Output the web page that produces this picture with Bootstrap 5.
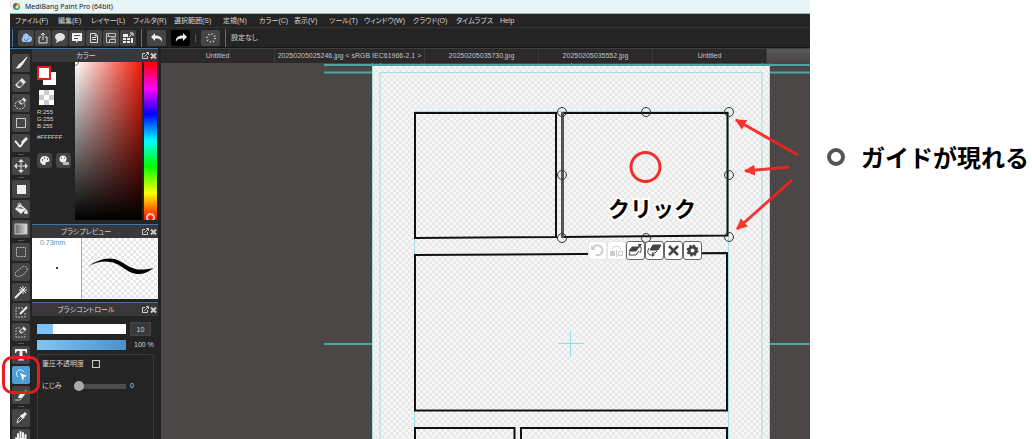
<!DOCTYPE html>
<html lang="ja">
<head>
<meta charset="utf-8">
<meta name="viewport" content="width=device-width, initial-scale=1">
<title>MediBang Paint Pro</title>
<link href="https://cdn.jsdelivr.net/npm/bootstrap@5.3.0/dist/css/bootstrap.min.css" rel="stylesheet">
<style>
  :root { --line:#3f74a8; --ink:#d4d4d4; --dark:#242424; --btn:#454446; }
  body { height:100vh; overflow:hidden; background:#fff; padding-left:10px;
    font:7px/10px "Liberation Sans","Noto Sans CJK JP",sans-serif; font-feature-settings:"palt"; color:#000; }
  button { padding:0; border:0; color:#e4e4e4; line-height:0; }
  button svg { display:block; margin:auto; }
  .app { background:var(--dark); color:var(--ink); min-width:0; }
  .app-body { min-height:0; }
  .titlebar { height:14px; background:#e8f5f7; color:#222; font-family:"Noto Sans",sans-serif; padding-left:3px; gap:5px; border-bottom:1px solid #9fb5b3; }
  .menus { height:14px; display:grid; grid-template-columns:43px 33px 42px 41px 49px 36px 35px 35px 35px 49px 43px 44px auto; padding-left:5px; align-items:center; border-bottom:1px solid #333; }
  .menus a { color:var(--ink); text-decoration:none; white-space:nowrap; }
  .bar { height:20px; padding-left:2px; gap:1px; border-bottom:1px solid #151515; }
  .bar button { width:16px; height:16px; background:var(--btn); border-radius:2px; }
  .bar .wide { width:19px; }
  .bar .divider { width:1px; height:18px; background:var(--line); }
  .bar .faint { height:8px; background:#555; }
  .tools { width:22px; padding:5px 2px 0; gap:2px; border-top:1px solid var(--line); }
  .tools button { width:18px; height:18px; flex:none; background:var(--btn); border-radius:2px; }
  .tools .rule { width:6px; height:1px; flex:none; background:#555; align-self:center; }
  .tools .current { background:#4d9fd8; position:relative; }
  .tools .current::after { content:""; position:absolute; inset:-10px; border:3px solid #e81c1c; border-radius:10px; z-index:3; pointer-events:none; }
  .panels { width:129px; padding-right:3px; }
  .panels header { height:14px; background:#39373a; border-top:1px solid var(--line); display:grid; grid-template-columns:1fr 22px; align-items:center; text-align:center; padding-left:4px; }
  .panels h2 { font:inherit; margin:0; }
  .color-body { height:162px; padding:0 1px 4px 5px; gap:2px; }
  .swatches { width:36px; padding-top:4px; line-height:7px; font-size:6px; }
  .chips { height:20px; position:relative; }
  .chips i { position:absolute; width:13px; height:13px; background:#fff; left:6px; top:6px; }
  .chips .front { left:0; top:0; width:14px; height:14px; border:2px solid #e41b1b; }
  .clear-chip { width:15px; height:15px; margin:4px 2px 4px; background:repeating-conic-gradient(#ccc 0 25%,#fff 0 50%) 0 0/10px 10px; }
  .swatches button { width:15px; height:15px; background:var(--btn); border-radius:3px; }
  .shade { flex:1; background:linear-gradient(to top,#000,transparent),linear-gradient(to right,#fff,#f21a08); position:relative; overflow:hidden; }
  .shade::before { content:""; position:absolute; width:8px; height:8px; left:-4px; top:-4px; border:1px solid #777; border-radius:50%; }
  .hue { width:13px; background:linear-gradient(#f00,#f0f 17%,#00f 33%,#0ff 50%,#0f0 66%,#ff0 83%,#f00); position:relative; overflow:hidden; }
  .hue::after { content:""; position:absolute; width:9px; height:9px; left:2px; bottom:-2px; border:2px solid #ffd0c8; border-radius:50%; }
  .preview { height:61px; margin-bottom:3px; background:#fff; }
  .tip { width:50px; border-right:1px solid #aaa; color:#4a97c8; padding-left:8px; }
  .tip svg { margin-left:-8px; }
  .checker { background:repeating-conic-gradient(#e6e6e6 0 25%,#fff 0 50%) 0 0/6px 6px; }
  .control { padding:6px 5px 0; min-height:0; }
  input[type=range] { -webkit-appearance:none; appearance:none; margin:0; width:89px; height:10px; display:block; }
  .fillbar::-webkit-slider-thumb { -webkit-appearance:none; width:1px; height:10px; }
  .size-bar { background:linear-gradient(to right,#7ec3f7 18%,#fff 18%); }
  .alpha-bar { background:linear-gradient(to right,#83c4f3,#4a92cc); }
  .num { width:21px; height:14px; background:#39393b; border:1px solid #444; color:var(--ink); text-align:center; font-size:7px; padding:0; }
  .options { border:1px solid #3b3b3b; border-bottom:0; border-radius:3px 3px 0 0; margin-top:4px; padding:4px; width:117px; flex:1; }
  .options input[type=checkbox] { appearance:none; width:8px; height:8px; border:1px solid #ccc; margin:0; }
  .options label { flex:none; }
  .blur-label { width:32px; }
  .options .soft { width:52px; height:10px; background:linear-gradient(#4d4d4d,#4d4d4d) center/100% 5px no-repeat; border-radius:3px; }
  .soft::-webkit-slider-thumb { -webkit-appearance:none; width:10px; height:10px; border-radius:50%; background:#a9a9a9; }
  .doc { min-width:0; }
  .doc-tabs { height:15px; background:#2b292a; border-top:1px solid #403f40; }
  .doc-tabs a { width:114px; color:#c6c6c6; text-decoration:none; text-align:center; line-height:14px; border-right:1px solid #3b3a3b; white-space:nowrap; }
  .doc-tabs .long { width:150px; }
  .doc-tabs .now { flex:1; background:linear-gradient(#5a5758,#484546); }
  .workspace { background:#4b4746; position:relative; overflow:hidden; min-height:0; }
  .workspace > svg { position:absolute; inset:0; width:100%; height:100%; }
  .click-label { font:bold 22px "Noto Sans CJK JP",sans-serif; font-feature-settings:normal; }
  .quick { position:absolute; left:427px; top:178px; }
  .quick button { width:19px; height:19px; background:#fff; border:1px solid #666; border-radius:3px; color:#444; }
  .quick button:disabled { color:#ccc; border-color:#e6e6e6; }
  .note { width:222px; padding:140px 0 0 17px; gap:16px; font:bold 24px/34px "Noto Sans CJK JP",sans-serif; font-feature-settings:normal; white-space:nowrap; margin:0; }
  .ring { width:18px; height:18px; border:4px solid #555; border-radius:50%; flex:none; }
</style>
</head>
<body class="d-flex">
<svg width="0" height="0" class="position-absolute" aria-hidden="true">
  <defs>
    <symbol id="head" viewBox="0 0 22 10" fill="none" stroke="#ccc"><path d="M9 2.500H6.500v5h5V5M8.500 5.500l4-4M10 1.500h2.500V4"/><path d="M15 2.500l5 5M20 2.500l-5 5" stroke-width="2"/></symbol>
    <symbol id="eraser" viewBox="0 0 14 14"><path d="M8 2l4 4-6 6H4L1 9z" fill="#e4e4e4"/><path d="M6 5l3 3-3 3-3-2z" fill="#555"/></symbol>
    <pattern id="check" width="6" height="6" patternUnits="userSpaceOnUse"><path d="M0 0h6v6H0z" fill="#f6f6f6"/><path d="M0 0h3v3H0zM3 3h3v3H3z" fill="#e9e9e9"/></pattern>
    <marker id="tipmark" viewBox="0 0 10 10" refX="9" refY="5" markerWidth="11" markerHeight="11" markerUnits="userSpaceOnUse" orient="auto"><path d="M0 0l10 5-10 5z" fill="#f5221e"/></marker>
  </defs>
</svg>

<main class="app flex-grow-1 d-flex flex-column">
  <div class="titlebar d-flex align-items-center flex-shrink-0">
    <svg width="7" height="7"><circle cx="3.500" cy="3.500" r="3.500" fill="#26a65b"/><path d="M3.500 0a3.500 3.500 0 0 1 3.500 3.500H3.500z" fill="#e8a33a"/><path d="M0 3.500a3.500 3.500 0 0 1 3.500-3.500v3.500z" fill="#c4403c"/><circle cx="4" cy="4" r="1.500" fill="#c9f1f4"/></svg>
    <span>MediBang Paint Pro (64bit)</span>
  </div>
  <nav class="menus flex-shrink-0">
    <a href="#">ファイル(F)</a><a href="#">編集(E)</a><a href="#">レイヤー(L)</a><a href="#">フィルタ(R)</a><a href="#">選択範囲(S)</a><a href="#">定規(N)</a><a href="#">カラー(C)</a><a href="#">表示(V)</a><a href="#">ツール(T)</a><a href="#">ウィンドウ(W)</a><a href="#">クラウド(O)</a><a href="#">タイムラプス</a><a href="#">Help</a>
  </nav>
  <div class="bar d-flex align-items-center flex-shrink-0">
    <span class="divider me-1"></span>
    <button aria-label="クラウド"><svg width="12" height="12"><path d="M3 10a3 3 0 0 1 0-5 3 3 0 0 1 6-1 3 3 0 0 1 0 6z" fill="#9cc6f2"/><path d="M4 7l2 2 3-3" fill="none" stroke="#3f7fc4"/></svg></button>
    <button aria-label="共有"><svg width="12" height="12" fill="none" stroke="#e4e4e4"><path d="M4 5H2v6h8V5H8M6 8V1M4 3l2-2 2 2"/></svg></button>
    <button aria-label="コメント"><svg width="12" height="12"><ellipse cx="6" cy="5" rx="5" ry="4" fill="#e4e4e4"/><path d="M3 7l-1 4 4-2z" fill="#e4e4e4"/></svg></button>
    <button aria-label="メッセージ"><svg width="12" height="12"><path d="M1 1h10v8H7l-2 2V9H1z" fill="#f0f0f0"/><path d="M3 3.500h6M3 6.500h4" stroke="#555"/></svg></button>
    <button aria-label="文書"><svg width="12" height="12" fill="none" stroke="#ddd"><path d="M2.500 1.500h5l2 2v7h-7zM4 5.500h4M4 7.500h4M7 2v2h2"/></svg></button>
    <button aria-label="一覧"><svg width="12" height="12" fill="none" stroke="#bbb"><path d="M1.500 1.500h9v3h-9zM1.500 4.500v6h3M4.500 7.500h6v3h-6zM3.500 1v3M6 6h5"/></svg></button>
    <button aria-label="グリッド"><svg width="12" height="12" fill="#eee"><path d="M1 2h5v3H1zM1 6h3v2H1zM5 6h3v2H5zM1 9h3v2H1zM5 9h3v2H5zM9 6h2v5H9z"/><path d="M7 5l3-3M8 1h3v3" stroke="#eee" fill="none"/></svg></button>
    <span class="divider ms-1 me-1"></span>
    <button class="wide" aria-label="元に戻す"><svg width="14" height="12"><path d="M5 1L1 5l4 4V6.500c4 0 6 .5 7 3.500 1-5-3-6.500-7-6.500z" fill="#eee"/></svg></button>
    <button class="wide mx-1 bg-black" aria-label="やり直す"><svg width="14" height="12"><path d="M9 1l4 4-4 4V6.500C5 6.500 3 7 2 10 1 5 5 3.500 9 3.500z" fill="#eee"/></svg></button>
    <span class="divider faint"></span>
    <button class="wide ms-1" aria-label="補正"><svg width="12" height="12"><circle cx="6" cy="6" r="4" fill="none" stroke="#ccc" stroke-width="2" stroke-dasharray="1 2.140"/></svg></button>
    <span class="divider ms-1 me-1"></span><span>設定なし</span>
  </div>

  <div class="app-body d-flex flex-grow-1">
    <div class="tools d-flex flex-column flex-shrink-0">
      <button aria-label="ブラシ"><svg width="14" height="14"><path d="M13 1L7 7l1 2z" stroke="#eee" fill="#eee"/><path d="M7 7l1 2c-1 3-4 4-7 3 3 0 3-5 6-5z" fill="#eee"/></svg></button>
      <button aria-label="消しゴム"><svg width="14" height="14"><use href="#eraser"/></svg></button>
      <button aria-label="選択消しゴム"><svg width="14" height="14"><ellipse cx="6" cy="9" rx="5" ry="4" fill="none" stroke="#ccc" stroke-dasharray="2 1"/><svg x="4" width="10" height="10"><use href="#eraser"/></svg></svg></button>
      <button aria-label="図形"><svg width="14" height="14"><path d="M2.500 2.500h9v9h-9z" fill="none" stroke="#ccc"/></svg></button>
      <button aria-label="ドット"><svg width="14" height="14" fill="none" stroke="#eee" stroke-width="2"><path d="M1 5l2 2M3 7l3 4M6 11l3-4"/><path d="M8 7l5-5" stroke-width="3"/></svg></button>
      <span class="rule"></span>
      <button aria-label="移動"><svg width="14" height="14" stroke="#ddd" fill="#ddd"><path d="M7 3v8M3 7h8"/><path d="M7 0l3 3H4zM7 14l3-3H4zM0 7l3-3v6zM14 7l-3-3v6z" stroke="none"/></svg></button>
      <span class="rule"></span>
      <button aria-label="塗りつぶし"><svg width="14" height="14"><path d="M3 3h9v9H3z" fill="#eee"/></svg></button>
      <button aria-label="バケツ"><svg width="14" height="14"><path d="M6 2l6 5-5 5-6-5z" fill="#eee"/><path d="M4 6V2q2-2 3 0v3" fill="none" stroke="#ccc"/><path d="M12 7q4 5 0 5t0-5" fill="#eee"/><path d="M3 6l4-1 3 2z" fill="#555"/></svg></button>
      <button aria-label="グラデーション"><svg width="14" height="14"><defs><linearGradient id="g"><stop stop-color="#666"/><stop offset="1" stop-color="#ddd"/></linearGradient></defs><path d="M1 2h12v10H1z" fill="url(#g)" stroke="#ccc"/></svg></button>
      <span class="rule"></span>
      <button aria-label="矩形選択"><svg width="14" height="14"><path d="M2.500 2.500h9v9h-9z" fill="none" stroke="#bbb" stroke-dasharray="2 1"/></svg></button>
      <button aria-label="投げなわ"><svg width="14" height="14"><path d="M2 11C-1 6 5 6 7 3s7-2 6 2-8 8-11 6z" fill="none" stroke="#bbb" stroke-dasharray="2 1"/></svg></button>
      <button aria-label="自動選択"><svg width="14" height="14" stroke="#eee"><path d="M1 13l7-7" stroke-width="2"/><path d="M9 1v8M5 5h8M6 2l6 6M12 2L6 8"/></svg></button>
      <button aria-label="選択ペン"><svg width="14" height="14" fill="none" stroke="#bbb"><path d="M9 3H2v9h9V8" stroke-dasharray="2 1"/><path d="M6 9l7-7" stroke="#eee" stroke-width="2"/></svg></button>
      <button aria-label="選択消し"><svg width="14" height="14"><path d="M6 3H2v9h9V9" fill="none" stroke="#bbb" stroke-dasharray="2 1"/><svg x="4" width="10" height="10"><use href="#eraser"/></svg></svg></button>
      <span class="rule"></span>
      <button aria-label="テキスト"><svg width="14" height="14" fill="#eee"><path d="M1 1h12v4h-1l-1-2H8.500v8.500H10v1H4v-1h1.500V3H3L2 5H1z"/></svg></button>
      <button class="current" aria-label="操作"><svg width="14" height="14"><path d="M4 9a4 4 0 1 1 6-5" fill="none" stroke="#d8efff"/><path d="M6 5l7 3-3 1-1 4z" fill="#fff"/></svg></button>
      <button aria-label="分割"><svg width="14" height="14"><path d="M5 7l7-5 1 2-5 6H4z" fill="#eee"/><path d="M1 12h5l3-4" fill="none" stroke="#ccc"/></svg></button>
      <span class="rule"></span>
      <button aria-label="スポイト"><svg width="14" height="14"><path d="M3 12l1-4 4-4 2 2-4 4z" fill="none" stroke="#ddd"/><path d="M7 4l3 3M9 5l3-3" stroke="#eee" stroke-width="3"/></svg></button>
      <button aria-label="手のひら"><svg width="14" height="14"><path d="M4 8V3M6.500 7V1M9 7V2M11.500 8V4M2 7l3 4" stroke="#eee" stroke-width="2" stroke-linecap="round"/><path d="M3 7h9v4l-2 3H6z" fill="#eee"/></svg></button>
    </div>

    <aside class="panels d-flex flex-column flex-shrink-0">
      <section>
        <header><h2>カラー</h2><svg width="22" height="10"><use href="#head"/></svg></header>
        <div class="color-body d-flex">
          <div class="swatches">
            <div class="chips"><i></i><i class="front"></i></div>
            <div class="clear-chip"></div>
            <div>R:255<br>G:255<br>B:255</div>
            <div class="mt-1">#FFFFFF</div>
            <div class="d-flex gap-1 mt-2 pt-1">
              <button aria-label="パレット"><svg width="11" height="11"><path d="M5.500 1a4.500 4.500 0 0 0 0 9c2 0 0-2 2-3 3 0 3-1 3-2 0-2-2-4-5-4z" fill="#eee"/><path d="M3 5h1M5 3h1M8 4h1" stroke="#444" stroke-width="1.500"/></svg></button>
              <button aria-label="パレット編集"><svg width="11" height="11"><circle cx="5" cy="4" r="3.500" fill="#eee"/><path d="M3 3h1M6 3h1" stroke="#444"/><path d="M5 7h6v3H5z" fill="#bbb"/></svg></button>
            </div>
          </div>
          <div class="shade"></div>
          <div class="hue"></div>
        </div>
      </section>
      <section>
        <header><h2>ブラシプレビュー</h2><svg width="22" height="10"><use href="#head"/></svg></header>
        <div class="preview d-flex">
          <div class="tip">0.73mm<svg class="d-block" width="50" height="40"><circle cx="25" cy="20" r="1"/></svg></div>
          <svg class="checker flex-grow-1" height="61" viewBox="0 0 75 61"><path d="M6 28C18 20 29 18 39 24S53 34 71 30C59 40 49 36 41 30S22 20 6 28z"/></svg>
        </div>
      </section>
      <section class="d-flex flex-column flex-grow-1">
        <header><h2>ブラシコントロール</h2><svg width="22" height="10"><use href="#head"/></svg></header>
        <div class="control d-flex flex-column flex-grow-1">
          <div class="d-flex align-items-center gap-1"><input class="fillbar size-bar" type="range" value="18" aria-label="サイズ"><input class="num" value="10" aria-label="サイズ値"></div>
          <div class="d-flex align-items-center gap-2 mt-1"><input class="fillbar alpha-bar" type="range" value="100" aria-label="不透明度"><span class="text-nowrap">100 %</span></div>
          <div class="options">
            <div class="d-flex align-items-center gap-2"><label for="press">筆圧不透明度</label><input id="press" type="checkbox"></div>
            <div class="d-flex align-items-center mt-2 pt-1"><label class="blur-label" for="blur">にじみ</label><input id="blur" class="soft" type="range" value="0"><span class="ms-1">0</span></div>
          </div>
        </div>
      </section>
    </aside>

    <div class="doc d-flex flex-column flex-grow-1">
      <nav class="doc-tabs d-flex flex-shrink-0"><a href="#">Untitled</a><a href="#" class="long">20250205025246.jpg &lt; sRGB IEC61966-2.1 &gt;</a><a href="#">20250205035730.jpg</a><a href="#">20250205035552.jpg</a><a href="#">Untitled</a><span class="now"></span></nav>
      <div class="workspace flex-grow-1">
        <svg>
          <g transform="translate(-161 -63)" fill="none">
            <path d="M324 65H810M324 72.500H810M324 344H810" stroke="#4fa5a3" stroke-width="2"/>
            <path d="M372.500 62v4M380.500 62v4M571.500 62v4M762.500 62v4M769.500 62v4" stroke="#4fa5a3"/>
            <path d="M372 66h398v700H372z" fill="url(#check)"/>
            <path d="M372.500 766V66M769.500 66v700M380 766V72.500h382V766M414.500 766V111.500h314V766" stroke="#a5dfe0"/>
            <path d="M570.500 331v26M558 343.500h26" stroke="#8edfe2"/>
            <g stroke="#111" stroke-width="2">
              <path d="M415 113h141V237l-141 1zM562 113h165.500V235.500L562 237z"/>
              <path d="M415 255l312-2v157.500H415zM415 428h99.500V500H415zM521 428h206V500H521z"/>
            </g>
            <path d="M562.500 112v126" stroke="#555" stroke-width="3"/>
            <g stroke="#333"><circle cx="562" cy="112" r="4.500"/><circle cx="646" cy="112" r="4.500"/><circle cx="729" cy="112" r="4.500"/><circle cx="562" cy="175" r="4.500"/><circle cx="729" cy="175" r="4.500"/><circle cx="562" cy="238" r="4.500"/><circle cx="646" cy="238" r="4.500"/><circle cx="729" cy="237" r="4.500"/></g>
            <circle cx="645.500" cy="167" r="14.500" stroke="#ee302d" stroke-width="3"/>
            <g stroke="#f5221e" stroke-width="3" opacity=".9"><path d="M798 155l-62-35" marker-end="url(#tipmark)"/><path d="M789 167l-44 4" marker-end="url(#tipmark)"/><path d="M792 180l-55 49" marker-end="url(#tipmark)"/></g>
            <text class="click-label" x="608" y="217" fill="#000" stroke="#fff" stroke-width="4" paint-order="stroke">クリック</text>
          </g>
        </svg>
        <div class="quick d-flex">
          <button disabled aria-label="元に戻す"><svg width="15" height="15" fill="none" stroke="currentColor" stroke-width="2"><path d="M3 5a5 5 0 1 1 3 7"/><path d="M1 2v5h5z" fill="currentColor" stroke="none"/></svg></button>
          <button disabled aria-label="反転"><svg width="15" height="15" fill="currentColor"><path d="M1 8h5v5H1z"/><path d="M9.500 8.500h4v4h-4zM3 6q4-6 9 0" fill="none" stroke="currentColor"/><path d="M7 7h1v7H7z"/></svg></button>
          <button aria-label="前面へ"><svg width="15" height="15" fill="none" stroke="currentColor"><path d="M4 4h7L8 8H1z" fill="currentColor"/><path d="M2 9l-1 3h7l3-4M11 2q4 3 1 8"/><path d="M10 1l4 0-3 4z" fill="currentColor" stroke="none"/></svg></button>
          <button aria-label="背面へ"><svg width="15" height="15" fill="none" stroke="currentColor"><path d="M6 2h8l-3 5H3z" fill="currentColor"/><path d="M2 5q-3 5 1 7h3M10 8l-2 2H5"/><path d="M5 10l3 2-3 2z" fill="currentColor" stroke="none"/></svg></button>
          <button aria-label="削除"><svg width="15" height="15"><path d="M3 3l9 9M12 3l-9 9" stroke="currentColor" stroke-width="2.500"/></svg></button>
          <button aria-label="設定"><svg width="15" height="15" fill="none" stroke="currentColor"><circle cx="7.500" cy="7.500" r="3.500" stroke-width="3"/><circle cx="7.500" cy="7.500" r="5" stroke-width="2" stroke-dasharray="2 1.930"/></svg></button>
        </div>
      </div>
    </div>
  </div>
</main>

<p class="note d-flex align-items-center align-self-start flex-shrink-0"><span class="ring"></span><span>ガイドが現れる</span></p>
<script src="https://cdn.jsdelivr.net/npm/bootstrap@5.3.0/dist/js/bootstrap.bundle.min.js"></script>
</body>
</html>
